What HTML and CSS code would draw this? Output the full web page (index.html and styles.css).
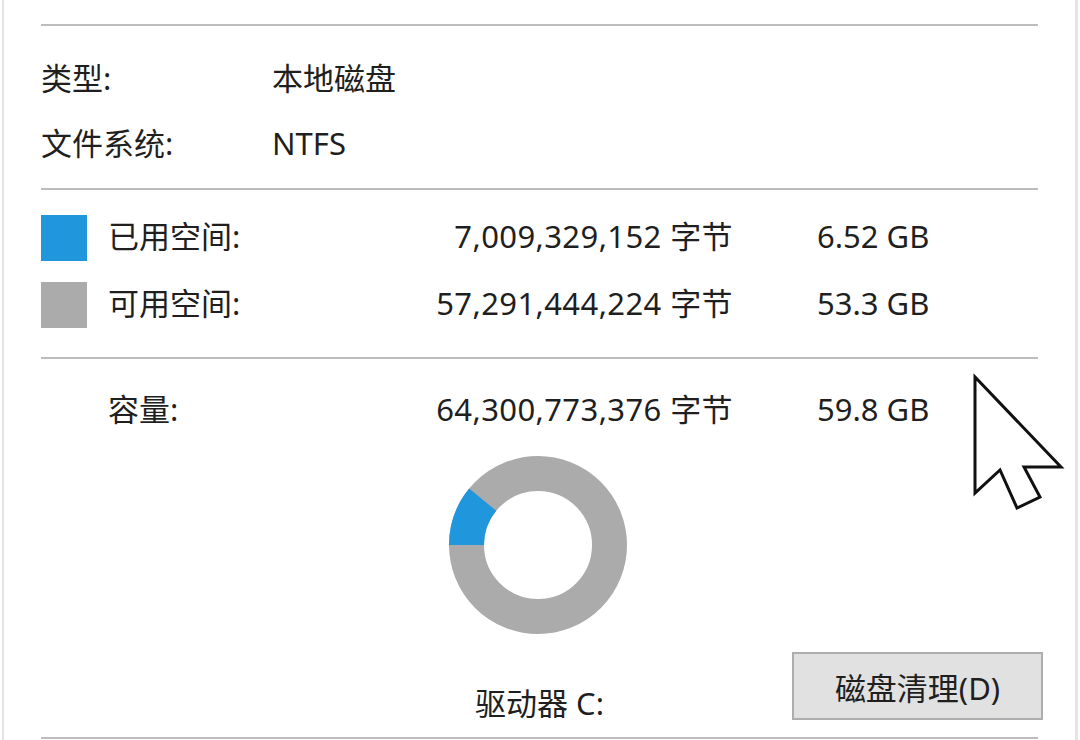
FILE: index.html
```html
<!DOCTYPE html>
<html lang="zh-CN">

<head>
    <meta charset="UTF-8">
    <meta name="viewport" content="width=device-width, initial-scale=1.0">
    <title>本地磁盘 (C:) 属性</title>
    <link rel="stylesheet" href="styles.css">
</head>

<body>
    <div class="dialog">
        <div class="sep"></div>

        <div class="info">
            <div class="info-row"><span>类型:</span><span>本地磁盘</span></div>
            <div class="info-row"><span>文件系统:</span><span>NTFS</span></div>
        </div>

        <div class="sep"></div>

        <div class="usage">
            <div class="usage-row">
                <span class="swatch used"></span>
                <span>已用空间:</span>
                <span class="bytes">7,009,329,152 字节</span>
                <span class="gb">6.52 GB</span>
            </div>
            <div class="usage-row">
                <span class="swatch free"></span>
                <span>可用空间:</span>
                <span class="bytes">57,291,444,224 字节</span>
                <span class="gb">53.3 GB</span>
            </div>
        </div>

        <div class="sep"></div>

        <div class="usage capacity">
            <div class="usage-row">
                <span></span>
                <span>容量:</span>
                <span class="bytes">64,300,773,376 字节</span>
                <span class="gb">59.8 GB</span>
            </div>
        </div>

        <div class="chart-area">
            <!-- used = 6.52 / 59.8 of the ring, starting at 9 o'clock -->
            <svg class="donut" width="180" height="180" viewBox="0 0 180 180">
                <circle cx="90" cy="90" r="71.5" fill="none" stroke="#ababab" stroke-width="35"/>
                <circle cx="90" cy="90" r="71.5" fill="none" stroke="#2096dd" stroke-width="35"
                    stroke-dasharray="49 400" transform="rotate(180 90 90)"/>
            </svg>
            <div class="drive">驱动器 C:</div>
            <button class="cleanup">磁盘清理(D)</button>
        </div>

        <div class="sep"></div>
    </div>

    <svg class="cursor" width="105" height="145" viewBox="0 0 105 145">
        <polygon points="10,7 10,123 35,100 52,138 75,127 59,97 96,97"
            fill="#ffffff" stroke="#111111" stroke-width="3" stroke-linejoin="miter"/>
    </svg>
</body>

</html>
```

FILE: styles.css
```css
:root {
    --text: #1f1f1f;
    --rule: #bdbdbd;
    --edge: #e4e4e4;
    --used: #2096dd;
    --free: #ababab;
    --button-bg: #e1e1e1;
    --button-border: #adadad;
}

body {
    margin: 0;
    position: relative;
    height: 740px;
    overflow: hidden;
    background-color: #ffffff;
    color: var(--text);
    font-family: "Noto Sans", "Noto Sans CJK SC", sans-serif;
    font-size: 31px;
}

.dialog {
    margin-left: 2px;
    width: 1076px;
    height: 740px;
    box-sizing: border-box;
    padding: 24px 37px 0 37px;
    border-left: 2px solid var(--edge);
    border-right: 3px solid var(--edge);
}

.sep {
    height: 2px;
    background-color: var(--rule);
}

.info {
    padding: 20px 0 12px;
}

.info-row {
    display: grid;
    grid-template-columns: 231px auto;
    height: 65px;
    line-height: 65px;
}

.usage {
    padding: 13px 0 20px;
}

.usage.capacity {
    padding: 17px 0 0;
}

.usage-row {
    display: grid;
    grid-template-columns: 67px 180px 445px auto;
    align-items: center;
    height: 67px;
    line-height: 67px;
}

.swatch {
    width: 46px;
    height: 46px;
    margin-top: 3px;
}

.swatch.used {
    background-color: var(--used);
}

.swatch.free {
    background-color: var(--free);
}

.bytes {
    text-align: right;
    white-space: nowrap;
    letter-spacing: 0.4px;
}

.gb {
    padding-left: 84px;
    white-space: nowrap;
}

.chart-area {
    display: grid;
    grid-template-columns: 1fr 180px 1fr;
    align-items: start;
    padding: 12px 0 14px;
}

.donut {
    grid-column: 2;
    grid-row: 1;
    display: block;
    margin-left: -2px;
}

.drive {
    grid-column: 2;
    grid-row: 2;
    justify-self: center;
    margin-top: 48px;
    line-height: 40px;
    white-space: nowrap;
}

.cleanup {
    grid-column: 3;
    grid-row: 2;
    justify-self: end;
    margin: 17px -5px 0 0;
    width: 251px;
    height: 68px;
    padding: 0;
    background-color: var(--button-bg);
    border: 2px solid var(--button-border);
    border-radius: 0;
    color: var(--text);
    font-family: inherit;
    font-size: 31px;
}

.cursor {
    position: absolute;
    left: 965px;
    top: 370px;
    pointer-events: none;
}
```
